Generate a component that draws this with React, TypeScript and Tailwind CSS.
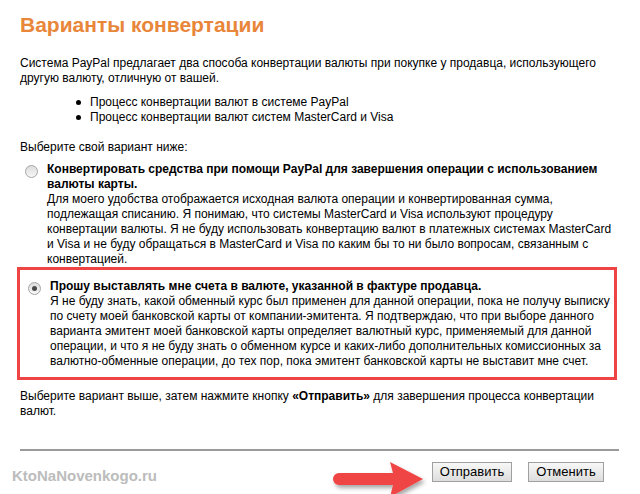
import type { ReactNode } from "react"

// Radio circle drawn like the old Windows control
function Radio({ checked }: { checked?: boolean }) {
  return (
    <div className="mt-[3px] ml-[5px] w-[13px] h-[13px] shrink-0 rounded-full border border-[#a6a6a6] bg-gradient-to-b from-[#dcdcdc] to-[#f7f7f7] flex items-center justify-center">
      {checked && <div className="w-[5px] h-[5px] rounded-full bg-[#4a4a4a]" />}
    </div>
  )
}

function Option({ checked, title, children }: { checked?: boolean; title: string; children: ReactNode }) {
  return (
    <div className="flex">
      <div className="w-[27px] shrink-0">
        <Radio checked={checked} />
      </div>
      <div className="flex-1">
        <div className="font-bold">{title}</div>
        <div>{children}</div>
      </div>
    </div>
  )
}

function Arrow() {
  return (
    <svg className="absolute left-[325px] top-[452px]" width="110" height="50" viewBox="0 0 110 50">
      <defs>
        <filter id="sh" x="-10%" y="-30%" width="130%" height="170%">
          <feDropShadow dx="2" dy="3" stdDeviation="2" floodColor="#000" floodOpacity="0.35" />
        </filter>
      </defs>
      <path
        d="M14 21 L68 21 L65 10 L98 27 L65 45 L68 33 L14 33 A6 6 0 0 1 14 21 Z"
        fill="#ef4444"
        filter="url(#sh)"
      />
    </svg>
  )
}

export default function App() {
  return (
    <div className="relative w-[640px] h-[494px] overflow-hidden bg-white font-['Liberation_Sans',Arial,sans-serif] text-[12px] leading-[15px] text-black">
      <div className="pl-[20px] pr-[26px] pt-[12px]">
        <h1 className="text-[21px] leading-[26px] font-bold text-[#e8863a]">Варианты конвертации</h1>

        <p className="mt-[18px]">
          Система PayPal предлагает два способа конвертации валюты при покупке у продавца, использующего другую
          валюту, отличную от вашей.
        </p>

        <ul className="mt-[9px]">
          {["Процесс конвертации валют в системе PayPal", "Процесс конвертации валют систем MasterCard и Visa"].map(
            (t) => (
              <li key={t} className="flex items-center">
                <span className="ml-[56px] mr-[9px] w-[5px] h-[5px] rounded-full bg-black" />
                {t}
              </li>
            )
          )}
        </ul>

        <p className="mt-[15px]">Выберите свой вариант ниже:</p>

        <div className="mt-[7px]">
          <Option title="Конвертировать средства при помощи PayPal для завершения операции с использованием валюты карты.">
            Для моего удобства отображается исходная валюта операции и конвертированная сумма, подлежащая списанию. Я
            понимаю, что системы MasterCard и Visa используют процедуру конвертации валюты. Я не буду использовать
            конвертацию валют в платежных системах MasterCard и Visa и не буду обращаться в MasterCard и Visa по каким
            бы то ни было вопросам, связанным с конвертацией.
          </Option>
        </div>

        <div className="-ml-[3px] -mr-[3px] border-[3px] border-[#ef4444] pl-[3px] pr-[3px] pt-[9px] pb-[8px]">
          <Option checked title="Прошу выставлять мне счета в валюте, указанной в фактуре продавца.">
            Я не буду знать, какой обменный курс был применен для данной операции, пока не получу выписку по счету моей
            банковской карты от компании-эмитента. Я подтверждаю, что при выборе данного варианта эмитент моей
            банковской карты определяет валютный курс, применяемый для данной операции, и что я не буду знать о
            обменном курсе и каких-либо дополнительных комиссионных за валютно-обменные операции, до тех пор, пока
            эмитент банковской карты не выставит мне счет.
          </Option>
        </div>

        <p className="mt-[9px]">
          Выберите вариант выше, затем нажмите кнопку <b>«Отправить»</b> для завершения процесса конвертации валют.
        </p>

        <div className="mt-[30px] -mr-[5px] h-[2px] bg-[#9a9a9a]" />

        <div className="mt-[11px] flex justify-end gap-[16px] pr-[10px]">
          <button className="h-[20px] w-[80px] border border-[#a0a0a0] bg-gradient-to-b from-[#f8f8f8] to-[#dddddd] text-[13px] leading-[18px]">
            Отправить
          </button>
          <button className="h-[20px] w-[76px] border border-[#a0a0a0] bg-gradient-to-b from-[#f8f8f8] to-[#dddddd] text-[13px] leading-[18px]">
            Отменить
          </button>
        </div>
      </div>

      <div className="absolute left-[12px] top-[468px] text-[15px] leading-[15px] font-bold text-[#bcbcbc]">
        KtoNaNovenkogo.ru
      </div>
      <Arrow />
    </div>
  )
}
